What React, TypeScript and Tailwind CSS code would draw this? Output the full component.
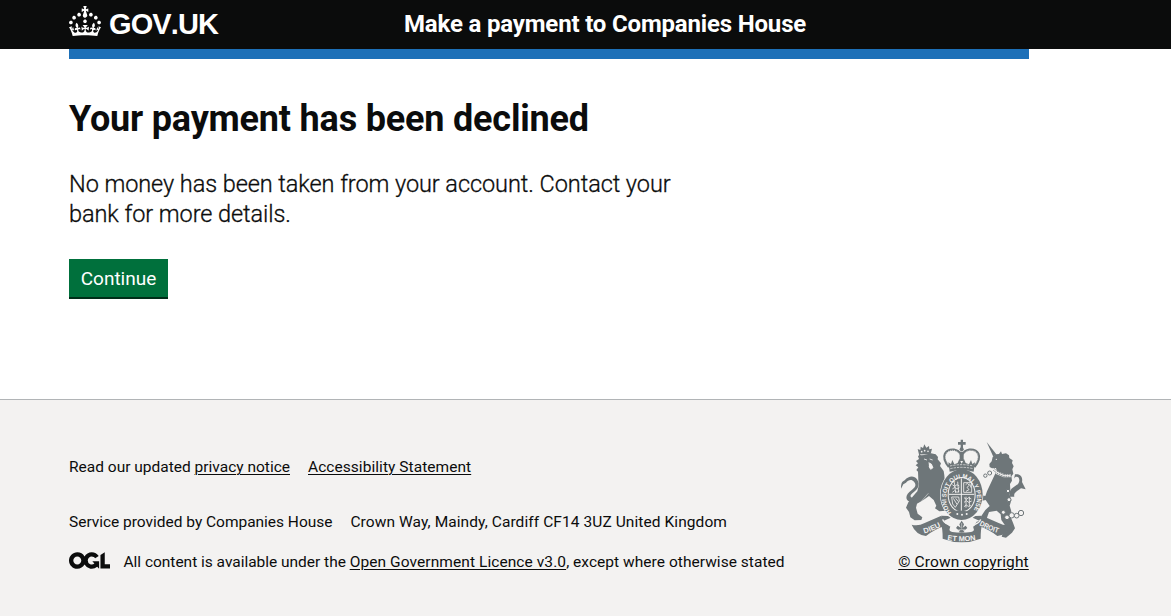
import type { ReactNode } from 'react';

function Crown() {
  return (
    <svg viewBox="0 0 32 30" className="h-[30px] w-8 fill-white" aria-hidden="true">
      <path
        fillRule="evenodd"
        d="M22.6 10.4c-1 .4-2-.1-2.4-1-.4-.9.1-2 1-2.4.9-.4 2 .1 2.4 1s-.1 2-1 2.4m-5.9 6.7c-.9.4-2-.1-2.4-1-.4-.9.1-2 1-2.4.9-.4 2 .1 2.4 1s-.1 2-1 2.4m10.8-3.7c-1 .4-2-.1-2.4-1-.4-.9.1-2 1-2.4.9-.4 2 .1 2.4 1s0 2-1 2.4m3.3 4.8c-1 .4-2-.1-2.4-1-.4-.9.1-2 1-2.4.9-.4 2 .1 2.4 1s-.1 2-1 2.4M17 4.7l2.3 1.2V2.5l-2.3.7-.2-.2.9-3h-3.4l.9 3-.2.2c-.1.1-2.3-.7-2.3-.7v3.4L15 4.7c.1.1.1.2.2.2l-1.3 4c-.1.2-.1.4-.1.6 0 1.1.8 2 1.9 2.2h.7c1-.2 1.9-1.1 1.9-2.1 0-.2 0-.4-.1-.6l-1.3-4c-.1-.2 0-.2.1-.3m-7.6 5.7c.9.4 2-.1 2.4-1 .4-.9-.1-2-1-2.4-.9-.4-2 .1-2.4 1s0 2 1 2.4m-5 3c.9.4 2-.1 2.4-1 .4-.9-.1-2-1-2.4-.9-.4-2 .1-2.4 1s.1 2 1 2.4m-3.2 4.8c.9.4 2-.1 2.4-1 .4-.9-.1-2-1-2.4-.9-.4-2 .1-2.4 1s0 2 1 2.4m14.8 11c4.4 0 8.6.3 12.3.8 1.1-4.5 2.4-7 3.7-8.8l-2.5-.9c.2 1.3.3 1.9 0 2.7-.4-.4-.8-1.1-1.1-2.3l-1.2 4c.7-.5 1.3-.8 2-.9-1.1 2.5-2.6 3.1-3.5 3-1.1-.2-1.7-1.2-1.5-2.1.3-1.2 1.5-1.5 2.1-.1 1.1-2.3-.8-3-2-2.3 1.9-1.9 2.1-3.5.6-5.6-2.1 1.6-2.1 3.2-1.2 5.5-1.2-1.4-3.2-.6-2.5 1.6.9-1.4 2.1-.5 1.9.8-.2 1.1-1.7 2.1-3.5 1.9-2.7-.2-2.9-2.1-2.9-3.6.7-.1 1.9.5 2.9 1.9l.4-4.3c-1.1 1.1-2.1 1.4-3.2 1.4.4-1.2 2.1-3 2.1-3h-5.4s1.7 1.9 2.1 3c-1.1 0-2.1-.2-3.2-1.4l.4 4.3c1-1.4 2.2-2 2.9-1.9-.1 1.5-.2 3.4-2.9 3.6-1.9.2-3.4-.8-3.5-1.9-.2-1.3 1-2.2 1.9-.8.7-2.3-1.2-3-2.5-1.6.9-2.2.9-3.9-1.2-5.5-1.5 2-1.3 3.7.6 5.6-1.2-.7-3.1 0-2 2.3.6-1.4 1.8-1.1 2.1.1.2.9-.3 1.9-1.5 2.1-.9.2-2.4-.5-3.5-3 .6 0 1.2.3 2 .9l-1.2-4c-.3 1.1-.7 1.9-1.1 2.3-.3-.8-.2-1.4 0-2.7l-2.9.9C1.3 23 2.6 25.5 3.7 30c3.7-.5 7.9-.8 12.3-.8"
      />
    </svg>
  );
}

function OglLogo() {
  return (
    <svg viewBox="0 0 483.2 195.7" className="-mt-[3px] h-[17px] w-[41px] shrink-0 fill-[#0b0c0c]" aria-hidden="true">
      <path d="M421.5 142.8V.1l-50.7 32.3v161.1h112.4v-50.7zm-122.3-9.6A47.12 47.12 0 0 1 221 97.8c0-26 21.1-47.1 47.1-47.1 16.7 0 31.4 8.7 39.7 21.8l42.7-27.2A97.63 97.63 0 0 0 268.1 0c-36.5 0-68.3 20.1-85.1 49.7A98 98 0 0 0 97.8 0C43.9 0 0 43.9 0 97.8s43.9 97.8 97.8 97.8c36.5 0 68.3-20.1 85.1-49.7a97.76 97.76 0 0 0 149.6 25.4l19.4 22.2h3v-87.8h-80l24.3 27.5zM97.8 145c-26 0-47.1-21.1-47.1-47.1s21.1-47.1 47.1-47.1 47.1 21.1 47.1 47.1S123.8 145 97.8 145" />
    </svg>
  );
}

function CoatOfArms() {
  return (
    <svg viewBox="30 27 378 312" className="h-[104px] w-[126px] -translate-x-px" fill="#6e7679" stroke="none" aria-hidden="true">
      {/* lion */}
      <path d="M88 77 83 57l8 3 1-10 7 4 4-11 6 10 8-5 1 10 8-2-5 20z" />
      <g fill="#f3f2f1"><circle cx="95" cy="65" r="2.500" /><circle cx="104" cy="62" r="2.500" /><circle cx="114" cy="64" r="2.500" /><path d="M90 72h33v2H90z" /></g>
      <path d="M93 77l30-7 14 3 7 8-1 7 10 12-3 8 11 15 2 13 1 15-4 14 2 12-2 36 12 22-4 7-20 2-13-9 4-8-8-17-14-12-17 12-19 11-3 12 5 18 14 11-3 8-20 1-13-9-4-16-9-13 7-16 14-18 13-15 5-20-2-14-1-25-5-5 6-8-8-6 7-6-6-7 9-6-3-8 6-6z" />
      <path d="M80 211c-25 14-42-7-22-25 13-11 25-18 14-31-8-9-17-5-24 3l-8 5-7 13c0-18 4-22 11-25 13-15 29-14 37-3 12 18 2 31-14 42-13 10 0 18 13 11z" />
      <path d="M102 87l9 3M119 87l9 3M116 98l8 4 5 11-7 5-5-8" fill="#f3f2f1" stroke="#f3f2f1" strokeWidth="2.500" />
      <path d="M115 190l-20 23M124 207l11 19" fill="none" stroke="#f3f2f1" strokeWidth="1.500" />
      {/* unicorn */}
      <path d="M290 36l29 37-9 7z" />
      <path d="M308 81l9-8 10-1 6-8 3 8 12-2 9 6 1 8 10 7-2 8 5 10-4 9 3 13-6 8-28 0-15-12-3-13-12 1-7-4-1-9 7-8z" />
      <path d="M318 126l15 9 31 2 2 15-6 10 1 18-2 14 5 17-5 16 5 17-2 17 7 17 6 17-9 13-18 15-13-3 3-9 12-7-4-17-12-17-2-17-12-11-23 4-4 11-5 15-13 9-3 13-14-3-5-5 7-11 11-3 5-17 10-15 13-12-12-18-18 4-13-8-10-14-9 1-3-8 14-8 14 6 12 13 12 2 5-14z" />
      <path d="M360 200c-8-31 26-27 28-48 1-14-12-15-16-6l3-13c17-3 24 9 21 23l11 22-14-3c-13 10-23 12-20 25z" />
      <path d="M310 117l12 12 20 8 20 0" fill="none" stroke="#f3f2f1" strokeWidth="9" />
      <path d="M311 114l13 12 18 8 18 0M310 121l14 11 18 8 18 1" fill="none" stroke="#6e7679" strokeWidth="2.500" strokeDasharray="5 2" />
      <g fill="#f3f2f1"><circle cx="319" cy="88" r="2" /></g>
      <g fill="#f3f2f1" stroke="#6e7679" strokeWidth="3">
        <circle cx="299" cy="129" r="6" /><circle cx="286" cy="137" r="5" />
        <circle cx="354" cy="183" r="5" /><circle cx="357" cy="209" r="6" />
        <circle cx="340" cy="247" r="6" /><circle cx="351" cy="262" r="7" />
        <circle cx="365" cy="256" r="8" /><circle cx="380" cy="257" r="7" /><circle cx="393" cy="249" r="8" />
      </g>
      {/* garter and shield */}
      <ellipse cx="215" cy="194" rx="65" ry="78" fill="#f3f2f1" />
      <ellipse cx="215" cy="194" rx="63" ry="76" />
      <ellipse cx="215" cy="194" rx="42" ry="53" fill="#f3f2f1" />
      <ellipse cx="215" cy="194" rx="39" ry="50" />
      <path d="M173 246l38-6 35 8-10 15-24 5-25-7z" />
      <path id="garter" d="M184 248A46 59 0 1 1 247 246" fill="none" />
      <g fontFamily="Liberation Sans" fontWeight="700" fontSize="19" fill="#f3f2f1">
        <text textLength="250" lengthAdjust="spacingAndGlyphs"><textPath href="#garter">HONI SOIT QUI MAL Y PENSE</textPath></text>
      </g>
      <path d="M214 145v97M177 193h76" fill="none" stroke="#f3f2f1" strokeWidth="3" />
      <g fill="none" stroke="#f3f2f1" strokeWidth="2.500">
        <path d="M187 164l7 5 7-5 7 4M187 177l7-5 7 5 7-4M187 187l7-5 7 5 7-4M193 157l4 32M203 155l3 33" />
        <path d="M221 158h24v29h-24zM227 164l5-4 6 6-7 6 6 7-9 5M239 161l4 12" />
        <path d="M185 201h21l2 12-12 19-8-10zM190 205l11 18M197 205l8 10" />
        <path d="M222 203l7 5 7-5 8 4M222 217l7-5 7 5 9-4M222 230l7-5 7 5 6-4M228 200v33M238 200v29" />
      </g>
      <g fill="#f3f2f1"><circle cx="202" cy="252" r="3" /><circle cx="216" cy="254" r="3" /><circle cx="230" cy="252" r="3" /></g>
      {/* royal crown */}
      <path d="M212 29h7v7h8v8h-8v10h-7V44h-8v-8h8z" />
      <circle cx="215" cy="58" r="6" />
      <path d="M177 111C149 76 168 57 192 59c14 2 18 9 23 17 5-8 9-15 23-17 24-2 43 17 15 52" fill="none" stroke="#6e7679" strokeWidth="7" />
      <path d="M174 103C158 75 170 60 190 61c15 1 19 14 25 18 6-4 10-17 25-18 20-1 33 14 16 42" fill="none" stroke="#f3f2f1" strokeWidth="2" strokeDasharray="3 3" />
      <path d="M209 65h12v28h-12zM175 97l8 5 4-12 6 13 10-4 5-12 7 14 7-14 5 12 10 4 6-13 4 12 8-5-4 28q-36-8-72 0z" />
      <path d="M180 108q35-8 70 0M181 116q34-8 68 0" fill="none" stroke="#f3f2f1" strokeWidth="2" strokeDasharray="7 3" />
      {/* motto ribbon */}
      <path d="M65 284q20 5 39-5l50-22 11 31q-32 10-57 30-31-4-43-34z" />
      <path d="M365 284q-20 5-39-5l-50-22-11 31q32 10 57 30 31-4 43-34z" />
      <path d="M154 257l20 1 8 5-20 9 3 8 16 9-4 15-16-8zM276 257l-20 1-8 5 20 9-3 8-16 9 4 15 16-8z" />
      <path d="M153 283q14-2 22 9 2 12 12 14 28 5 56 0 10-2 12-14 8-11 22-9-5 12-5 43-57 22-114 0 0-31-5-43z" />
      <path d="M158 268q3 10 15 14l9 7M272 268q-3 10-15 14l-9 7" fill="none" stroke="#f3f2f1" strokeWidth="4" />
      <g fill="none">
        <path id="ribbon-left" d="M103 310q29-8 65-29" />
        <path id="ribbon-middle" d="M172 330q43 8 88-1" />
        <path id="ribbon-right" d="M267 285q27 16 67 27" />
      </g>
      <g fontFamily="Liberation Sans" fontWeight="700" fontSize="22" fill="#f3f2f1">
        <text textLength="54" lengthAdjust="spacingAndGlyphs"><textPath href="#ribbon-left">DIEU</textPath></text>
        <text textLength="86" lengthAdjust="spacingAndGlyphs"><textPath href="#ribbon-middle">ET MON</textPath></text>
        <text textLength="62" lengthAdjust="spacingAndGlyphs"><textPath href="#ribbon-right">DROIT</textPath></text>
      </g>
      <path d="M215 272l7 11-4 10 9-6 5 7-8 7h-5l5 6-9 1-9-1 5-6h-5l-8-7 5-7 9 6-4-10z" />
      <path d="M215 279v17M205 299h20" fill="none" stroke="#f3f2f1" strokeWidth="1.500" />
    </svg>
  );
}

function FooterLink({ className, children }: { className: string; children: ReactNode }) {
  return (
    <a href="#" className={`underline decoration-1 underline-offset-2 ${className}`}>
      {children}
    </a>
  );
}

export default function App() {
  return (
    <div className="flex h-[616px] flex-col bg-white font-['Roboto','Liberation_Sans',sans-serif] text-[#0b0c0c]">
      <header className="h-[49px] shrink-0 bg-[#0b0c0c] pl-[69px] text-white">
        <div className="flex h-12 items-center">
          <a href="#" className="flex w-[335px] items-center gap-2 pb-[6px]">
            <Crown />
            <span className="mt-[6px] font-['Liberation_Sans',sans-serif] text-[29px] leading-none font-bold tracking-[-0.9px] [font-kerning:none]">GOV.UK</span>
          </a>
          <a href="#" className="text-2xl font-bold tracking-[-0.17px] whitespace-nowrap">Make a payment to Companies House</a>
        </div>
      </header>
      <main className="ml-[69px] h-[350px] w-[960px] shrink-0 border-t-10 border-[#1d70b8]">
        <h1 className="mt-[35px] text-4xl leading-[50px] font-bold tracking-[-0.19px] whitespace-nowrap">Your payment has been declined</h1>
        <p className="mt-[25px] text-[23.5px] leading-[30px] font-light tracking-[-0.07px] whitespace-nowrap [-webkit-text-stroke:0.3px]">
          No money has been taken from your account. Contact your<br />bank for more details.
        </p>
        <button className="mt-[30px] flex h-10 w-[99px] items-center justify-center border-b-2 border-[#002d18] bg-[#00703c] pt-0.5 text-[19px] text-white">
          Continue
        </button>
      </main>
      <footer className="flex flex-1 justify-between border-t border-[#b1b4b6] bg-[#f3f2f1] pr-[142px] pl-[69px] text-[15.5px] leading-5">
        <div className="pt-[57px] whitespace-nowrap">
          <div className="flex">
            <span>Read our updated <FooterLink className="">privacy notice</FooterLink></span>
            <FooterLink className="ml-[18px] tracking-[0.05px]">Accessibility Statement</FooterLink>
          </div>
          <div className="mt-[35px] flex gap-[18px]">
            <span className="tracking-[-0.02px]">Service provided by Companies House</span>
            <span className="tracking-[0.08px]">Crown Way, Maindy, Cardiff CF14 3UZ United Kingdom</span>
          </div>
          <div className="mt-5 flex items-center">
            <OglLogo />
            <span className="ml-[13.5px]">
              <span className="tracking-[-0.02px]">All content is available under the </span>
              <FooterLink className="tracking-[0.08px]">Open Government Licence v3.0</FooterLink>
              <span className="tracking-[0.04px]">, except where otherwise stated</span>
            </span>
          </div>
        </div>
        <div className="flex w-[131px] flex-col items-center pt-[39px]">
          <CoatOfArms />
          <FooterLink className="mt-[9px] tracking-[0.13px] whitespace-nowrap">© Crown copyright</FooterLink>
        </div>
      </footer>
    </div>
  );
}
